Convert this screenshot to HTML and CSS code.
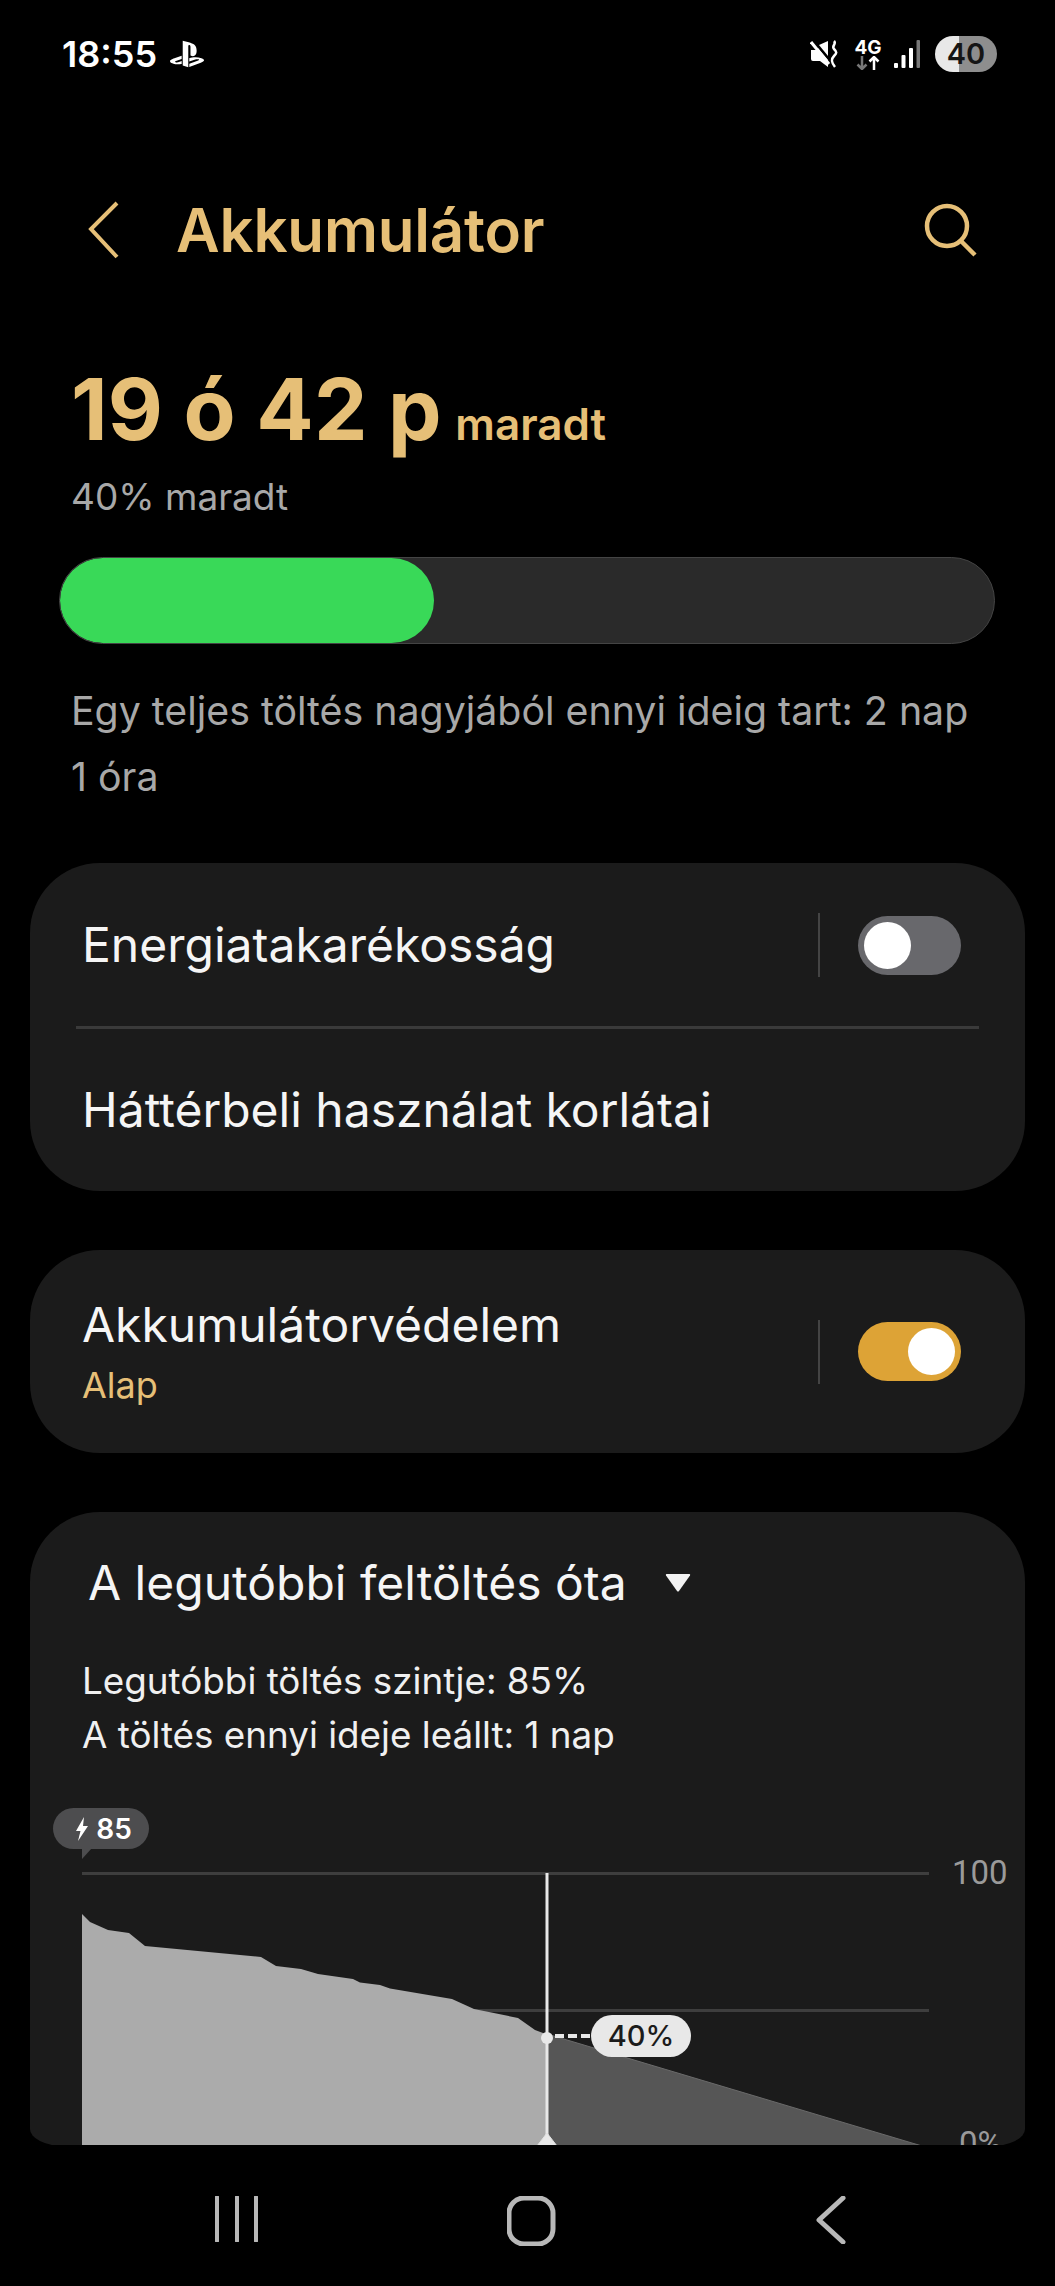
FILE: index.html
```html
<!DOCTYPE html>
<html lang="hu">
<head>
<meta charset="utf-8">
<title>Akkumulátor</title>
<link rel="stylesheet" href="styles.css">
</head>
<body>
<div class="screen">
  <main class="main">
    <div class="status">
      <div class="status-left">
        <span class="time">18:55</span>
        <svg class="ps" viewBox="0 0 24 24"><path d="M8.984 2.596v17.548l3.915 1.261V6.688c0-.69.304-1.151.794-.991.636.18.76.814.76 1.505v5.875c2.441 1.193 4.362-.002 4.362-3.152 0-3.237-1.126-4.675-4.438-5.827-1.307-.448-3.728-1.186-5.39-1.502zm4.656 16.241l6.296-2.275c.715-.258.826-.625.246-.818-.586-.192-1.637-.139-2.357.123l-4.205 1.5V14.98l.24-.085s1.201-.42 2.913-.615c1.696-.18 3.785.03 5.437.661 1.848.601 2.04 1.472 1.576 2.072-.465.6-1.622 1.036-1.622 1.036l-8.544 3.107V18.86zM1.807 18.6c-1.9-.545-2.214-1.668-1.352-2.32.801-.586 2.16-1.052 2.16-1.052l5.615-2.013v2.313L4.205 17c-.705.271-.825.632-.239.826.586.195 1.637.15 2.343-.12L8.247 17v2.074c-.12.03-.256.044-.39.073-1.939.331-3.996.196-6.038-.479z"/></svg>
      </div>
      <div class="status-right">
        <svg class="mute" viewBox="0 0 28 28"><path class="mute-body" d="M1 10h5l2-2 10 12v7l-8-6H3q-2 0-2-2z"/><path class="mute-body" d="M9 5l9-4v15z"/><path class="mute-slash" d="M1 2l18 22"/><path class="mute-wave" d="M24 1c3 3-3 5 0 8s3 4 0 7-3 6 1 11"/></svg>
        <div class="net">
          <span class="net-label">4G</span>
          <svg class="net-arrows" viewBox="0 0 24 14"><path class="arrow-down" d="M6 0v13M1.500 8.500L6 13l4.500-4.500"/><path class="arrow-up" d="M18 14V1M13.500 5.500L18 1l4.500 4.500"/></svg>
        </div>
        <svg class="signal" viewBox="0 0 26 28"><rect x="0" y="23" width="4" height="5" rx="1" class="sig-on"/><rect x="7.500" y="15" width="4" height="13" rx="1" class="sig-on"/><rect x="15" y="8" width="4" height="20" rx="1" class="sig-on"/><rect x="22.500" y="0" width="3.500" height="28" rx="1" class="sig-off"/></svg>
        <div class="battery"><span class="battery-num">40</span></div>
      </div>
    </div>

    <header class="header">
      <svg class="back" viewBox="0 0 32 58"><path d="M29 2L3 28l26 28" /></svg>
      <h1 class="title">Akkumulátor</h1>
      <svg class="search" viewBox="0 0 54 54"><circle cx="23" cy="23" r="20"/><path d="M37 38l14 14"/></svg>
    </header>

    <section class="summary">
      <div class="remain"><span class="remain-big">19 ó 42 p</span> <span class="remain-small">maradt</span></div>
      <div class="percent">40% maradt</div>
      <div class="bar"><div class="bar-fill"></div></div>
      <p class="full">Egy teljes töltés nagyjából ennyi ideig tart: 2 nap 1 óra</p>
    </section>

    <section class="card card-first">
      <div class="row row-a">
        <span class="row-text">Energiatakarékosság</span>
        <div class="sw-wrap"><span class="sep"></span><span class="toggle"><span class="knob"></span></span></div>
      </div>
      <div class="divider"></div>
      <div class="row row-b"><span class="row-text">Háttérbeli használat korlátai</span></div>
    </section>

    <section class="card card-second">
      <div class="row-stack">
        <span class="row-text">Akkumulátorvédelem</span>
        <span class="row-sub">Alap</span>
      </div>
      <div class="sw-wrap"><span class="sep"></span><span class="toggle toggle-on"><span class="knob"></span></span></div>
    </section>

    <section class="card card-last">
      <div class="since"><span class="since-text">A legutóbbi feltöltés óta</span><svg class="caret" viewBox="0 0 26 18"><path d="M1 1.500c-.500-1 0-1.500 1-1.500h22c1 0 1.500.5 1 1.500L14 17c-.500.700-1.500.700-2 0z"/></svg></div>
      <p class="stats">Legutóbbi töltés szintje: 85%<br>A töltés ennyi ideje leállt: 1 nap</p>
      <div class="chart">
        <svg class="chart-svg" viewBox="0 0 995 300" width="995" height="300">
          <path class="grid" d="M52 51.500H899M52 188.500H899"/>
          <path class="projected" d="M517 212L892 324H517z"/>
          <path class="used" d="M52 92L60 100 78 108 99 111 115 124 231 135 246 144 271 147 288 152 323 157 330 160.500 350 163 360 166.500 422 177 444 187 488 196 505 208 517 212.500V324H52z"/>
          <path class="cursor" d="M517 51V324"/>
          <circle class="dot" cx="517" cy="216" r="6"/>
          <path class="dash" d="M525 214H562"/>
          <path class="tip" d="M507 324l10-13 10 13z"/>
          <path class="tip" d="M500 324H52" />
        </svg>
        <div class="bubble"><svg class="bolt" viewBox="0 0 12 24"><path d="M8 0L0 14h4.500L2 24 12 9H7z"/></svg><span>85</span></div>
        <span class="bubble-tail"></span>
        <div class="pill">40%</div>
        <span class="axis axis-100">100</span>
        <span class="axis axis-0">0%</span>
      </div>
    </section>
  </main>

  <nav class="nav">
    <svg class="nav-icon nav-recent" viewBox="0 0 46 46"><path d="M3 1v44M23 1v44M42 1v44"/></svg>
    <svg class="nav-icon nav-home" viewBox="0 0 50 50"><rect x="2" y="2" width="44" height="46" rx="15"/></svg>
    <svg class="nav-icon nav-back" viewBox="0 0 30 48"><path d="M27 2L3 24l24 22"/></svg>
  </nav>
</div>
</body>
</html>
```
FILE: styles.css
```css
* { box-sizing: border-box; }
html, body { margin: 0; padding: 0; background: #000; }
body { font-family: Inter, "Noto Sans", sans-serif; color: #f2f2f2; }
.screen { width: 1055px; height: 2286px; overflow: hidden; display: flex; flex-direction: column; background: #000; }
.main { height: 2145px; overflow: hidden; flex: none; }

.status { height: 108px; display: flex; justify-content: space-between; align-items: center; padding: 0 58px 0 62px; }
.status-left { display: flex; align-items: center; gap: 13px; }
.time { font-size: 36px; font-weight: 600; color: #fff; line-height: 44px; }
.ps { width: 34px; height: 34px; fill: #fff; }
.status-right { display: flex; align-items: center; }
.mute { width: 28px; height: 28px; margin-right: 18px; }
.mute-body { fill: #fff; }
.mute-slash { stroke: #fff; stroke-width: 3; fill: none; }
.mute-wave { stroke: #fff; stroke-width: 2.500; fill: none; }
.net { display: flex; flex-direction: column; align-items: center; width: 24px; margin-right: 14px; }
.net-label { font-size: 19px; font-weight: 700; line-height: 17px; color: #fff; }
.net-arrows { width: 24px; height: 14px; fill: none; stroke-width: 2.500; }
.arrow-down { stroke: #777; }
.arrow-up { stroke: #fff; }
.signal { width: 26px; height: 28px; margin-right: 15px; }
.sig-on { fill: #fff; }
.sig-off { fill: #777; }
.battery { width: 62px; height: 36px; border-radius: 18px; background: linear-gradient(90deg, #e8e8e8 0 39%, #8e8e8e 39% 100%); display: flex; align-items: center; justify-content: center; }
.battery-num { font-size: 29px; font-weight: 600; color: #151515; line-height: 36px; }

.header { height: 120px; margin-top: 62px; display: flex; align-items: center; padding: 0 77px 0 88px; }
.back { width: 32px; height: 58px; fill: none; stroke: #e6bf77; stroke-width: 4; }
.title { margin: 0 0 0 56px; flex: 1; font-size: 60px; font-weight: 600; letter-spacing: -.2px; color: #e6bf77; line-height: 70px; }
.search { width: 54px; height: 54px; fill: none; stroke: #e6bf77; stroke-width: 4.500; }

.summary { padding: 0 0 0 71px; }
.remain { margin-top: 70px; height: 103px; line-height: 100px; color: #e6bf77; white-space: nowrap; }
.remain-big { font-size: 85px; font-weight: 700; letter-spacing: .2px; }
.remain-small { font-size: 44px; font-weight: 600; margin-left: 9px; }
.percent { margin-top: 9px; font-size: 37px; line-height: 50px; color: #a8a8a8; }
.bar { margin: 35px 0 0 -12px; width: 936px; height: 87px; border-radius: 44px; background: #2a2a2a; border: 1px solid #444; overflow: hidden; }
.bar-fill { width: 374px; height: 100%; border-radius: 44px; background: #39d958; }
.full { margin: 34px 70px 0 0; font-size: 39.300px; line-height: 66px; color: #a8a8a8; }

.card { margin: 0 30px; background: #1b1b1b; border-radius: 70px; }
.card-first { margin-top: 53px; height: 328px; padding-top: 1px; }
.row { display: flex; align-items: center; justify-content: space-between; padding: 0 64px 0 52px; }
.row-a { height: 162px; }
.row-b { height: 161px; }
.row-text { font-size: 48px; line-height: 58px; color: #f5f5f5; }
.divider { height: 3px; margin: 0 46px; background: #3a3a3a; }
.sw-wrap { display: flex; align-items: center; }
.sep { width: 2px; height: 64px; background: #444; margin-right: 38px; }
.toggle { width: 103px; height: 59px; border-radius: 30px; background: #68686c; padding: 6px; display: flex; }
.knob { width: 47px; height: 47px; border-radius: 50%; background: #fff; }
.toggle-on { background: #dda336; justify-content: flex-end; }

.card-second { margin-top: 59px; height: 203px; display: flex; align-items: center; justify-content: space-between; padding: 0 64px 0 52px; }
.row-stack { display: flex; flex-direction: column; }
.row-sub { font-size: 36px; line-height: 46px; margin-top: 8px; color: #e6bf77; }

.card-last { margin-top: 59px; height: 634px; overflow: hidden; border-radius: 70px 70px 34px 34px / 70px 70px 17px 17px; position: relative; }
.since { display: flex; align-items: center; padding: 42px 0 0 58px; height: 100px; }
.since-text { font-size: 48px; line-height: 58px; color: #f5f5f5; }
.caret { width: 26px; height: 18px; margin-left: 38px; fill: #f2f2f2; }
.stats { margin: 42px 0 0 52px; font-size: 36.800px; line-height: 54px; color: #f0f0f0; }

.chart { position: absolute; left: 0; top: 310px; width: 995px; height: 324px; }
.chart-svg { display: block; overflow: visible; }
.grid { stroke: #3e3e3e; stroke-width: 3; fill: none; }
.used { fill: #ababab; }
.projected { fill: #565656; stroke: #6a6a6a; stroke-width: 1; }
.cursor { stroke: #e8e8e8; stroke-width: 3; }
.dot { fill: #e8e8e8; }
.dash { stroke: #e8e8e8; stroke-width: 4; stroke-dasharray: 9 4; }
.tip { fill: #e8e8e8; stroke: #e0e0e0; stroke-width: 1; }

.bubble { position: absolute; left: 23px; top: -14px; width: 96px; height: 41px; border-radius: 21px; background: #4d4d4f; display: flex; align-items: center; justify-content: center; gap: 8px; padding-left: 6px; font-size: 28px; font-weight: 600; color: #fff; }
.bolt { width: 12px; height: 24px; fill: #fff; }
.bubble-tail { position: absolute; left: 52px; top: 26px; border-style: solid; border-width: 11px 10px 0 0; border-color: #4d4d4f transparent transparent transparent; }
.pill { position: absolute; left: 561px; top: 193px; width: 100px; height: 42px; border-radius: 21px; background: #e8e8e8; color: #1b1b1b; font-size: 29px; font-weight: 500; line-height: 42px; text-align: center; }
.axis { position: absolute; font-family: Roboto, sans-serif; font-size: 33px; line-height: 40px; color: #9a9a9a; }
.axis-100 { left: 922px; top: 31px; }
.axis-0 { left: 929px; top: 302px; }

.nav { flex: 1; position: relative; display: flex; align-items: flex-start; padding: 51px 0 0 214px; }
.nav-icon { fill: none; stroke: #b8b8b8; flex: none; }
.nav-recent { width: 46px; height: 46px; stroke-width: 4; stroke-linecap: round; }
.nav-home { width: 50px; height: 50px; margin: 0 0 0 247px; stroke-width: 5; }
.nav-back { width: 30px; height: 48px; margin: 0 0 0 259px; stroke-width: 5; stroke-linecap: round; stroke-linejoin: round; }
```
